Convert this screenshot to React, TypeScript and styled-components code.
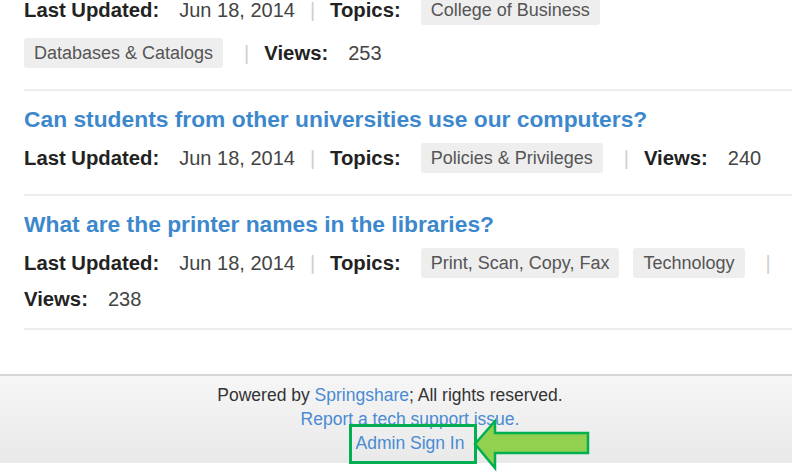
import styled, { createGlobalStyle } from "styled-components";

const GlobalStyle = createGlobalStyle`
  html, body {
    margin: 0;
    padding: 0;
    background: #ffffff;
    overflow: hidden;
  }
  body {
    font-family: "Liberation Sans", Arial, sans-serif;
  }
`;

const Page = styled.div`
  width: 792px;
  height: 475px;
  overflow: hidden;
  background: #ffffff;
`;

const List = styled.div`
  padding-left: 24px;
`;

const Item = styled.div<{ $first?: boolean }>`
  padding: ${(p) => (p.$first ? "0" : "14px")} 0 17px;
  border-bottom: 2px solid #ededed;
  display: flex;
  flex-direction: column;
  gap: 6px;
`;

const Title = styled.a`
  font-size: 22.8px;
  line-height: 28px;
  font-weight: bold;
  color: #3d88cc;
  text-decoration: none;
`;

const Meta = styled.div<{ $first?: boolean }>`
  display: flex;
  flex-wrap: wrap;
  align-items: center;
  row-gap: 5px;
  font-size: 20px;
  line-height: 24px;
  margin-top: ${(p) => (p.$first ? "-9px" : "0")};
`;

const Label = styled.span`
  font-weight: bold;
  color: #222222;
  font-size: 20.3px;
  margin-right: 20px;
`;

const Value = styled.span`
  color: #444444;
`;

const Sep = styled.span<{ $afterTag?: boolean }>`
  color: #cfcfcf;
  margin: 0 15px 0 ${(p) => (p.$afterTag ? "7px" : "15px")};
`;

const Tag = styled.span`
  display: inline-block;
  background: #eeeeee;
  color: #555555;
  font-size: 18px;
  line-height: 20px;
  padding: 5px 10px;
  margin: 4px 14px 4px 0;
  border-radius: 3px;
  white-space: nowrap;
`;

const Footer = styled.footer`
  margin-top: 44px;
  border-top: 2px solid #d6d6d6;
  background: linear-gradient(#f6f6f6, #e9e9e9);
  padding: 7px 0 8px;
  display: flex;
  flex-direction: column;
  align-items: center;
  font-size: 17.5px;
  line-height: 24px;
  color: #333333;
`;

const FooterLine = styled.div<{ $shift: number }>`
  padding-left: ${(p) => (p.$shift > 0 ? p.$shift : 0)}px;
  padding-right: ${(p) => (p.$shift < 0 ? -p.$shift : 0)}px;
`;

const FooterLink = styled.a`
  color: #4a8bd2;
  text-decoration: none;
`;

const Highlighted = styled.span`
  position: relative;
  display: inline-block;
`;

const HighlightBox = styled.span`
  position: absolute;
  left: -7px;
  right: -13px;
  top: -7px;
  bottom: -9px;
  border: 3.5px solid #00b050;
  box-sizing: border-box;
  pointer-events: none;
`;

const Arrow = styled.svg`
  position: absolute;
  left: calc(100% + 10px);
  top: -12px;
  width: 116px;
  height: 51px;
  overflow: visible;
`;

type Entry = {
  title?: string;
  date: string;
  topics: string[];
  views: number;
};

const entries: Entry[] = [
  {
    date: "Jun 18, 2014",
    topics: ["College of Business", "Databases & Catalogs"],
    views: 253,
  },
  {
    title: "Can students from other universities use our computers?",
    date: "Jun 18, 2014",
    topics: ["Policies & Privileges"],
    views: 240,
  },
  {
    title: "What are the printer names in the libraries?",
    date: "Jun 18, 2014",
    topics: ["Print, Scan, Copy, Fax", "Technology"],
    views: 238,
  },
];

function App() {
  return (
    <Page>
      <GlobalStyle />
      <List>
        {entries.map((entry, i) => (
          <Item key={i} $first={!entry.title}>
            {entry.title && <Title href="#">{entry.title}</Title>}
            <Meta $first={!entry.title}>
              <Label>Last Updated:</Label>
              <Value>{entry.date}</Value>
              <Sep>|</Sep>
              <Label>Topics:</Label>
              {entry.topics.map((t) => (
                <Tag key={t}>{t}</Tag>
              ))}
              <Sep $afterTag>|</Sep>
              <Label>Views:</Label>
              <Value>{entry.views}</Value>
            </Meta>
          </Item>
        ))}
      </List>
      <Footer>
        <FooterLine $shift={-12}>
          Powered by <FooterLink href="#">Springshare</FooterLink>; All rights
          reserved.
        </FooterLine>
        <FooterLine $shift={28}>
          <FooterLink href="#">Report a tech support issue.</FooterLink>
        </FooterLine>
        <FooterLine $shift={28}>
          <Highlighted>
            <FooterLink href="#">Admin Sign In</FooterLink>
            <HighlightBox />
            <Arrow viewBox="0 0 116 51">
              <polygon
                points="1,25 21,2 21,14 114,14 114,34 21,34 21,49"
                fill="#92d050"
                stroke="#00b050"
                strokeWidth="2.5"
                strokeLinejoin="miter"
              />
            </Arrow>
          </Highlighted>
        </FooterLine>
      </Footer>
    </Page>
  );
}

export default App;
